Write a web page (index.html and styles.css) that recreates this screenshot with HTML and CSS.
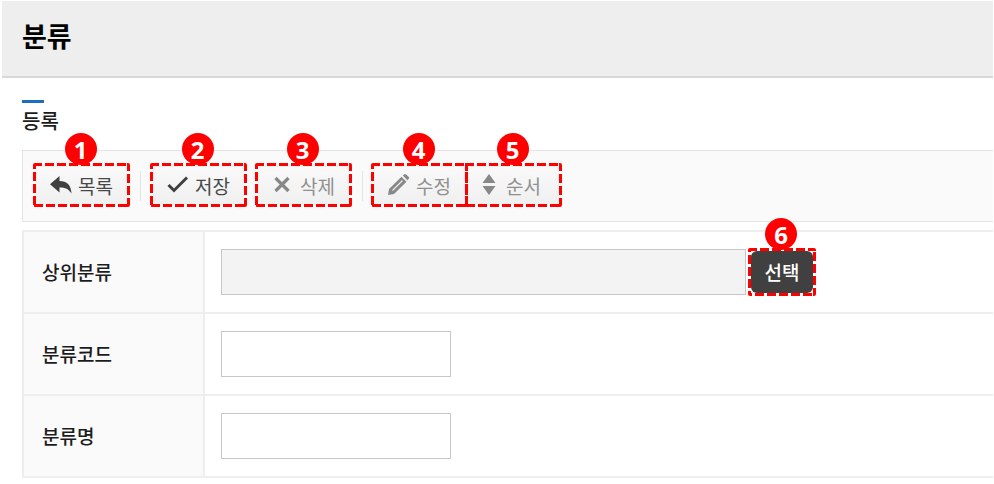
FILE: index.html
```html
<!DOCTYPE html>
<html lang="ko">
<head>
<meta charset="utf-8">
<title>분류</title>
<link rel="stylesheet" href="styles.css">
</head>
<body>
<header class="page-header"><h1>분류</h1></header>
<main class="content">
  <h2 class="section-title">등록</h2>
  <div class="toolbar">
    <div class="marked">
      <button class="tool" type="button"><svg class="icon" viewBox="0 0 22 22"><path d="M9.500 2v5C17 7 21 11 21.500 19.500 18.500 15 15.500 13.500 9.500 13.500v5L0 10.300z" fill="#404040"/></svg>목록</button>
      <svg class="outline"><rect/></svg><span class="badge">1</span>
    </div>
    <span class="divider"></span>
    <div class="marked">
      <button class="tool" type="button"><svg class="icon" viewBox="0 0 22 22"><path d="M1.500 11l5.500 5.500L20 3.500" fill="none" stroke="#404040" stroke-width="3"/></svg>저장</button>
      <svg class="outline"><rect/></svg><span class="badge">2</span>
    </div>
    <div class="marked delete">
      <button class="tool" type="button" disabled><svg class="icon" viewBox="0 0 22 22"><path d="M3.500 4l13 13M16.500 4l-13 13" fill="none" stroke="#888" stroke-width="3.200"/></svg>삭제</button>
      <svg class="outline"><rect/></svg><span class="badge">3</span>
    </div>
    <span class="divider"></span>
    <div class="marked edit">
      <button class="tool" type="button" disabled><svg class="icon" viewBox="0 0 22 22"><path d="M0 21l1-6L13.500 2.800l5 5L6 20zM14.800 1.500l2-1.500q1 0 2 1l2.500 2.500q0 1-2 2.800z" fill="#888"/><path d="M4.500 16.500L14.500 6.500" stroke="#e8e8e8" stroke-width="1.300"/></svg>수정</button>
      <svg class="outline"><rect/></svg><span class="badge">4</span>
    </div>
    <div class="marked order">
      <button class="tool" type="button" disabled><svg class="icon" viewBox="0 0 22 22"><path d="M11 0l6.500 9h-13zM4.500 12h13L11 21z" fill="#888"/></svg>순서</button>
      <svg class="outline"><rect/></svg><span class="badge">5</span>
    </div>
  </div>
  <table class="form">
    <tr>
      <th scope="row"><label for="parent">상위분류</label></th>
      <td><div class="field"><input class="wide" id="parent" type="text" readonly>
        <div class="marked pick"><button class="select" type="button">선택</button>
          <svg class="outline"><rect/></svg><span class="badge">6</span></div></div></td>
    </tr>
    <tr>
      <th scope="row"><label for="code">분류코드</label></th>
      <td><div class="field"><input id="code" type="text"></div></td>
    </tr>
    <tr>
      <th scope="row"><label for="name">분류명</label></th>
      <td><div class="field"><input id="name" type="text"></div></td>
    </tr>
  </table>
</main>
</body>
</html>
```
FILE: styles.css
```css
* { box-sizing: border-box; }
body {
  margin: 0;
  padding: 1px 1px 0 2px;
  background: #fff;
  color: #1c1c1c;
  font-family: "Noto Sans CJK KR", sans-serif;
  font-size: 19px;
  line-height: 28px;
}
button, input { font: inherit; margin: 0; }
.page-header {
  height: 77px;
  padding: 15px 20px 0;
  background: #eee;
  border-bottom: 2px solid #d8d8d8;
}
h1 { margin: 0; font-size: 27px; line-height: 40px; font-weight: 700; color: #000; }
.content { padding: 22px 0 0 20px; }
.section-title { margin: 0 0 11px; font-size: 20px; line-height: 36px; font-weight: 500; }
.section-title::before {
  content: "";
  display: block;
  width: 22px;
  height: 3px;
  background: #1c6fbe;
}
.toolbar {
  display: flex;
  align-items: flex-start;
  height: 72px;
  padding: 12px 10px 0;
  background: #fafafa;
  border: 1px solid #e4e4e4;
  border-right: 0;
}
.marked { position: relative; flex: none; width: 97px; height: 44px; padding: 3px; }
.tool {
  display: flex;
  align-items: center;
  justify-content: center;
  gap: 6px;
  width: 100%;
  height: 38px;
  padding: 2px 0 0;
  border: 1px solid #f0f0f0;
  border-radius: 4px;
  background: linear-gradient(#f9f9f9, #f0f0f0);
  color: #484848;
  font-weight: 400;
}
.tool:disabled { color: #909090; }
.icon { flex: none; width: 22px; height: 22px; margin-top: -3px; }
.divider { flex: none; width: 1px; height: 30px; margin: 8px 9px 0 10px; background: #e4e4e4; }
.delete { margin-left: 8px; }
.edit { margin-left: -1px; }
.order { margin-left: -3px; }
.order .tool { justify-content: flex-start; padding-left: 9px; }
.outline { position: absolute; inset: 0; width: 100%; height: 100%; border-radius: 2px; overflow: hidden; pointer-events: none; }
.outline rect {
  width: 100%;
  height: 100%;
  fill: none;
  stroke: #f00;
  stroke-width: 6;
  stroke-dasharray: 9 3;
}
.badge {
  position: absolute;
  top: -30px;
  left: 50%;
  width: 32px;
  height: 32px;
  margin-left: -17px;
  border-radius: 50%;
  background: #f00;
  color: #fff;
  font: 700 24px/33px "Noto Sans", sans-serif;
  text-align: center;
}
.form { width: 100%; margin-top: 8px; border-collapse: collapse; }
.form tr { height: 82px; border-top: 2px solid #eee; border-bottom: 2px solid #eee; }
.form th {
  width: 181px;
  padding: 0 18px;
  border-left: 2px solid #eee;
  border-right: 2px solid #eee;
  background: #fafafa;
  font-weight: 500;
  text-align: left;
}
.form td { padding: 0 16px; }
.field { display: flex; align-items: center; height: 46px; }
input { width: 230px; height: 46px; padding: 0 10px; border: 1px solid #c8c8c8; background: #fff; }
.wide { width: 525px; background: #f3f3f3; }
.pick { width: 68px; height: 48px; margin-left: 2px; }
.select { width: 100%; height: 42px; padding: 0; border: 0; border-radius: 6px; background: #404040; color: #fff; font-weight: 500; }
```
